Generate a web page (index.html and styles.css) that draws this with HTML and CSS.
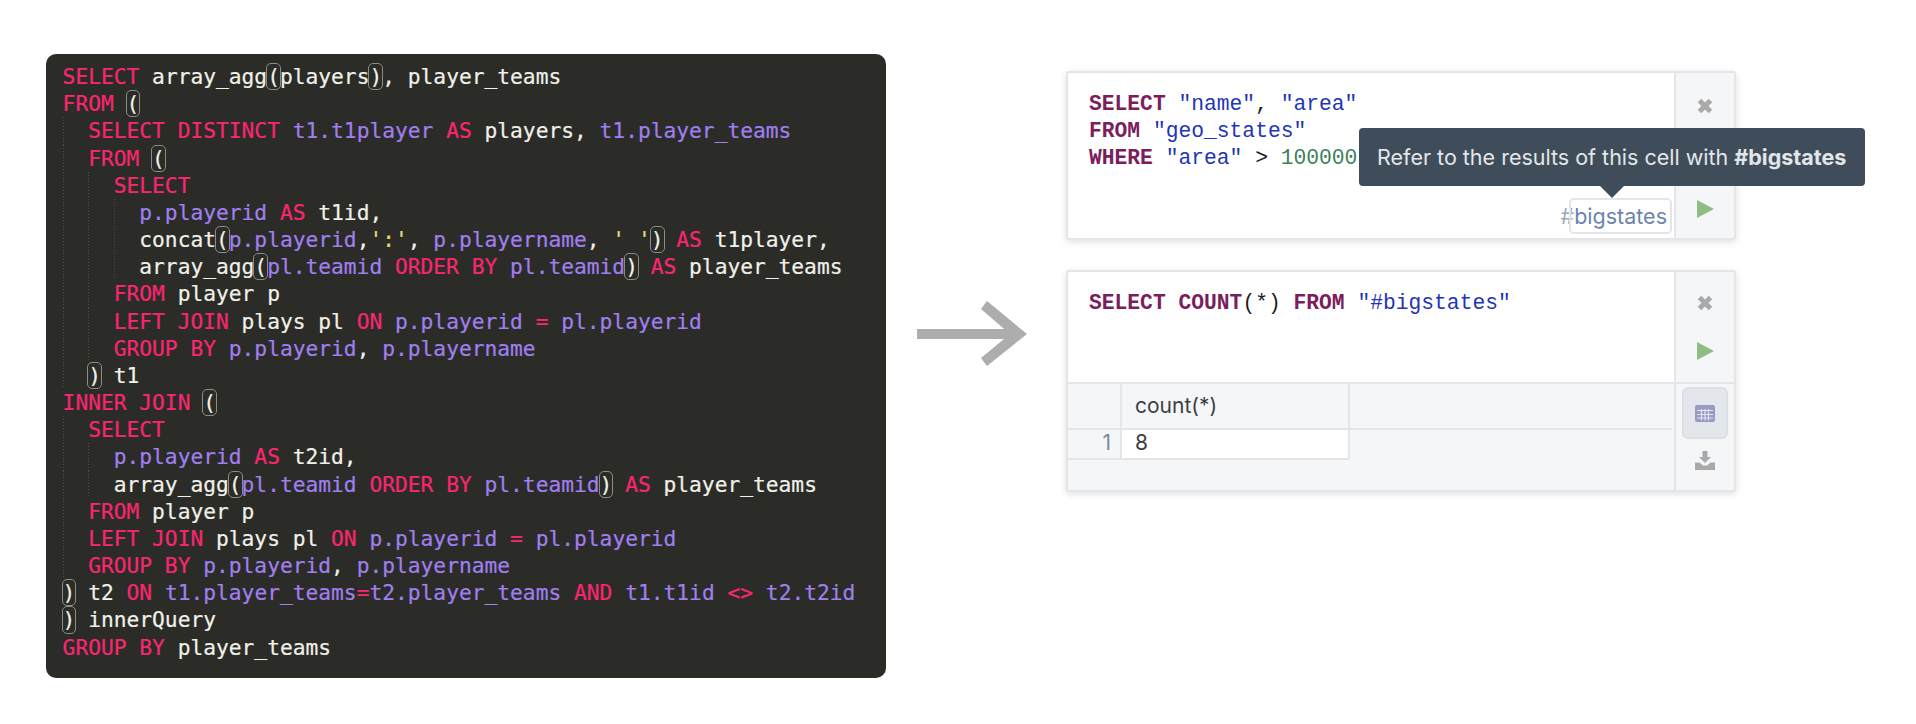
FILE: index.html
```html
<!DOCTYPE html>
<html lang="en">
<head>
<meta charset="utf-8">
<title>SQL cells</title>
<link rel="stylesheet" href="styles.css">
</head>
<body>
<main class="page">
<div class="code">
<div class="ln"><b>SELECT</b> array_agg<u>(</u>players<u>)</u>, player_teams</div>
<div class="ln"><b>FROM</b> <u>(</u></div>
<div class="ln"><i></i><b>SELECT DISTINCT</b> <s>t1.t1player</s> <b>AS</b> players, <s>t1.player_teams</s></div>
<div class="ln"><i></i><b>FROM</b> <u>(</u></div>
<div class="ln"><i></i><i></i><b>SELECT</b></div>
<div class="ln"><i></i><i></i><i></i><s>p.playerid</s> <b>AS</b> t1id,</div>
<div class="ln"><i></i><i></i><i></i>concat<u>(</u><s>p.playerid</s>,<em>':'</em>, <s>p.playername</s>, <em>' '</em><u>)</u> <b>AS</b> t1player,</div>
<div class="ln"><i></i><i></i><i></i>array_agg<u>(</u><s>pl.teamid</s> <b>ORDER BY</b> <s>pl.teamid</s><u>)</u> <b>AS</b> player_teams</div>
<div class="ln"><i></i><i></i><b>FROM</b> player p</div>
<div class="ln"><i></i><i></i><b>LEFT JOIN</b> plays pl <b>ON</b> <s>p.playerid</s> <b>=</b> <s>pl.playerid</s></div>
<div class="ln"><i></i><i></i><b>GROUP BY</b> <s>p.playerid</s>, <s>p.playername</s></div>
<div class="ln"><i></i><u>)</u> t1</div>
<div class="ln"><b>INNER JOIN</b> <u>(</u></div>
<div class="ln"><i></i><b>SELECT</b></div>
<div class="ln"><i></i><i></i><s>p.playerid</s> <b>AS</b> t2id,</div>
<div class="ln"><i></i><i></i>array_agg<u>(</u><s>pl.teamid</s> <b>ORDER BY</b> <s>pl.teamid</s><u>)</u> <b>AS</b> player_teams</div>
<div class="ln"><i></i><b>FROM</b> player p</div>
<div class="ln"><i></i><b>LEFT JOIN</b> plays pl <b>ON</b> <s>p.playerid</s> <b>=</b> <s>pl.playerid</s></div>
<div class="ln"><i></i><b>GROUP BY</b> <s>p.playerid</s>, <s>p.playername</s></div>
<div class="ln"><u>)</u> t2 <b>ON</b> <s>t1.player_teams</s><b>=</b><s>t2.player_teams</s> <b>AND</b> <s>t1.t1id</s> <b>&lt;&gt;</b> <s>t2.t2id</s></div>
<div class="ln"><u>)</u> innerQuery</div>
<div class="ln"><b>GROUP BY</b> player_teams</div>
</div>

<svg class="arrow" width="110" height="65" viewBox="0 0 110 65" aria-hidden="true">
  <path d="M0 28H100V38H0ZM70 0L110 33L70 65L64 57L93 33L64 8Z" fill="#adadad"/>
</svg>

<section class="cells">
  <article class="cell cell-one">
    <div class="editor">
      <pre class="sql"><b>SELECT</b> <s>"name"</s>, <s>"area"</s>
<b>FROM</b> <s>"geo_states"</s>
<b>WHERE</b> <s>"area"</s> &gt; <em>100000</em></pre>
      <div class="name"><span class="hash">#</span><span class="name-box">bigstates</span></div>
    </div>
    <div class="side">
      <svg class="ic" width="18" height="18" viewBox="0 0 18 18"><path d="M3.5 3.5L14.500 14.500M14.500 3.500L3.500 14.500" stroke="#a9a9a9" stroke-width="5"/></svg>
      <svg class="ic" width="18" height="20" viewBox="0 0 18 20"><path d="M1 1L18 10L1 19Z" fill="#8fbb84"/></svg>
    </div>
    <div class="tip">Refer to the results of this cell with <strong>#bigstates</strong></div>
  </article>

  <article class="cell cell-two">
    <div class="top">
      <div class="editor">
        <pre class="sql"><b>SELECT COUNT</b>(*) <b>FROM</b> <s>"#bigstates"</s></pre>
      </div>
      <div class="side side-two">
        <svg class="ic" width="18" height="18" viewBox="0 0 18 18"><path d="M3.5 3.5L14.500 14.500M14.500 3.500L3.500 14.500" stroke="#a9a9a9" stroke-width="5"/></svg>
        <svg class="ic" width="18" height="20" viewBox="0 0 18 20"><path d="M1 1L18 10L1 19Z" fill="#8fbb84"/></svg>
      </div>
    </div>
    <div class="bottom">
      <div class="results">
        <div class="thead"><div class="rowno"></div><div class="col">count(*)</div></div>
        <div class="trow"><div class="rowno">1</div><div class="col">8</div></div>
      </div>
      <div class="side side-three">
        <div class="tab">
          <svg width="20" height="17" viewBox="0 0 20 17"><rect width="20" height="17" rx="2" fill="#9a9ac8"/><path d="M2 5.500H18M2 9.500H18M2 13H18M6.500 4V15.500M10 4V15.500M13.500 4V15.500" stroke="#e2e5e9" stroke-width="1.200"/></svg>
        </div>
        <svg class="dl" width="20" height="19" viewBox="0 0 20 19"><path d="M7.500 0H12.500V6H16L10 12L4 6H7.500Z" fill="#a9a9a9"/><path d="M0 11.500H4.500L8 14.500H12L15.500 11.500H20V19H0Z" fill="#a9a9a9"/></svg>
      </div>
    </div>
  </article>
</section>
</main>
</body>
</html>
```

FILE: styles.css
```css
* { box-sizing: border-box; }
html, body { margin: 0; background: #fff; }
.page {
  display: flex;
  align-items: flex-start;
  width: 1916px;
  height: 724px;
  padding: 54px 0 0 46px;
  overflow: hidden;
}
.code {
  flex: none;
  width: 840px;
  height: 624px;
  padding: 9px 0 0 16.600px;
  background: #2b2c27;
  border-radius: 10px;
  color: #f1f1ea;
  font: 21.240px/27.180px "DejaVu Sans Mono", monospace;
  -webkit-text-stroke: 0.2px;
}
.ln { height: 27.180px; white-space: pre; }
.code b { font-weight: 400; color: #f92672; }
.code s { text-decoration: none; color: #a07ff0; }
.code em { font-style: normal; color: #e6db74; }
.code i {
  display: inline-block;
  width: 2ch;
  height: 27.180px;
  vertical-align: top;
  background: linear-gradient(#4d4e49 50%, transparent 50%) left top / 1px 3px repeat-y;
}
.code u {
  display: inline-block;
  width: 1ch;
  height: 27.180px;
  vertical-align: top;
  text-decoration: none;
  position: relative;
}
.code u::after {
  content: "";
  position: absolute;
  inset: 0 -1px;
  border: 1px solid #8b8c86;
  border-radius: 5px;
}
.arrow { flex: none; margin: 247px 0 0 31px; }
.cells {
  flex: none;
  width: 670px;
  margin: 17px 0 0 39px;
  display: flex;
  flex-direction: column;
  gap: 30px;
}
.cell {
  position: relative;
  background: #fff;
  border: 2px solid #e3e5e8;
  border-radius: 3px;
  box-shadow: 0 2px 7px rgba(0, 0, 0, .13);
  display: flex;
}
.cell-one { height: 169px; }
.cell-two { height: 222px; flex-direction: column; }
.editor { flex: 1; position: relative; padding: 18px 0 0 21px; }
.sql {
  margin: 0;
  font: 21.300px/27.200px "Liberation Mono", monospace;
  color: #1c1c1c;
}
.sql b { color: #7b1e5b; font-weight: 700; }
.sql s { text-decoration: none; color: #1f35b6; }
.sql em { font-style: normal; color: #3d8059; }
.side {
  flex: none;
  width: 60px;
  background: #f5f6f8;
  border-left: 2px solid #e3e5e8;
  display: flex;
  flex-direction: column;
  align-items: center;
}
.cell-one .side { padding-top: 24px; gap: 84px; }
.ic { display: block; }
.name {
  position: absolute;
  right: 2px;
  bottom: 4px;
  display: flex;
  align-items: center;
  font: 21.500px "Inter", sans-serif;
  color: #6c84ad;
}
.hash { color: #9ba8b9; margin-right: -5px; }
.name-box {
  height: 36px;
  padding: 0 3px;
  line-height: 33px;
  border: 2px solid #e3e5e8;
  border-radius: 5px;
}
.tip {
  position: absolute;
  left: 291px;
  top: 55px;
  width: 506px;
  height: 58px;
  padding-left: 18px;
  background: #3f4d5b;
  border-radius: 4px;
  color: #e3e6e9;
  font: 21.500px/59px "Inter", sans-serif;
  white-space: nowrap;
}
.tip::after {
  content: "";
  position: absolute;
  left: 241px;
  top: 58px;
  border: 12px solid transparent;
  border-top-color: #3f4d5b;
  border-bottom: 0;
}
.top { height: 110px; display: flex; }
.side-two { padding-top: 22px; gap: 29px; }
.bottom {
  flex: 1;
  display: flex;
  background: #f5f6f8;
  border-top: 2px solid #e3e5e8;
}
.results { flex: 1; font: 21px "Inter", sans-serif; color: #3d3f42; }
.thead, .trow { display: flex; }
.thead { height: 46px; border-bottom: 2px solid #e3e5e8; margin-right: 2px; }
.trow { height: 30px; width: 282px; border-bottom: 2px solid #e3e5e8; border-right: 2px solid #e3e5e8; border-radius: 0 0 2px 0; }
.rowno {
  flex: none;
  width: 54px;
  border-right: 2px solid #e3e5e8;
  text-align: right;
  padding-right: 9px;
  color: #7a8a99;
  line-height: 26px;
}
.col { padding-left: 13px; }
.thead .col { width: 228px; border-right: 2px solid #e3e5e8; line-height: 44px; }
.trow .col { flex: 1; background: #fff; line-height: 26px; }
.side-three { padding-top: 3px; }
.tab {
  width: 46px;
  height: 52px;
  background: #e3e6ea;
  border: 2px solid #dcdfe3;
  border-radius: 6px;
  display: flex;
  align-items: center;
  justify-content: center;
}
.dl { margin-top: 12px; }
```
